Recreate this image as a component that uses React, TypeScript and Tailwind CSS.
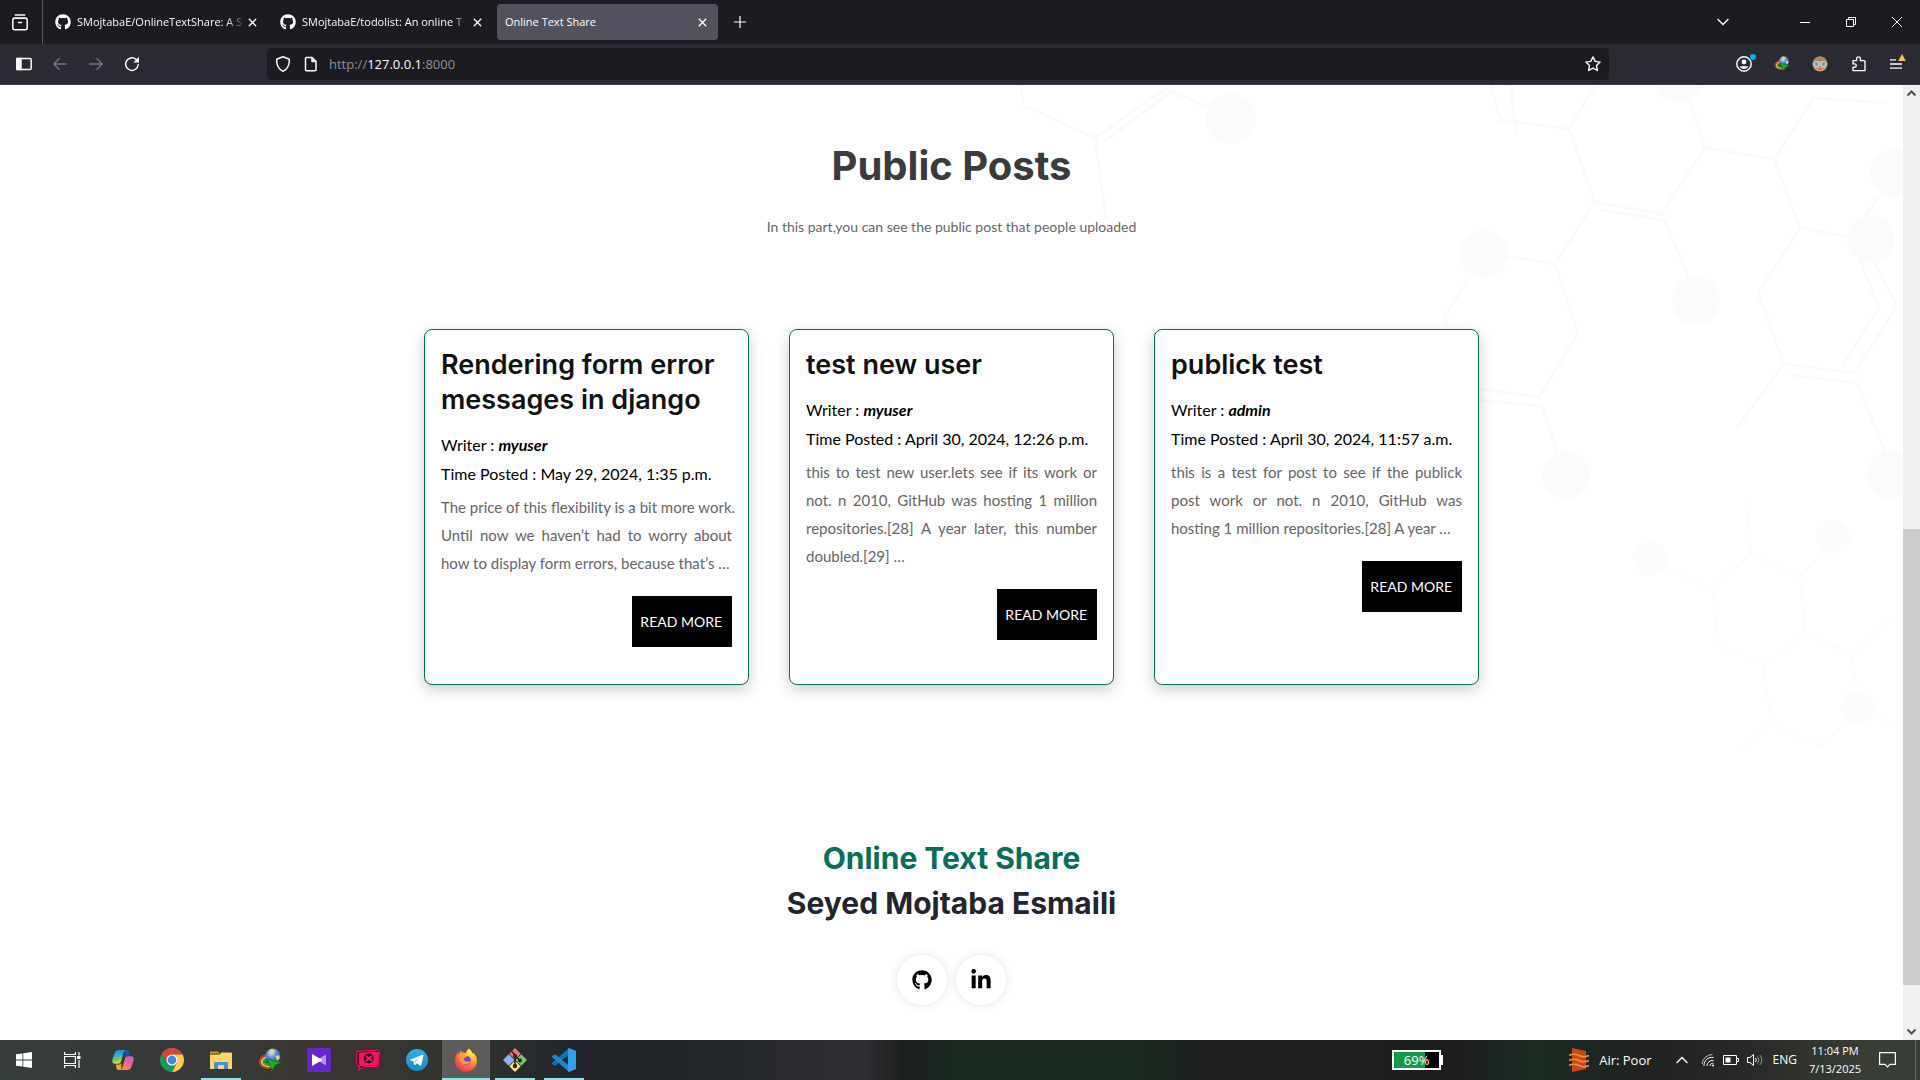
import React from "react";
import { FaGithub, FaLinkedinIn } from "react-icons/fa";

const display = "font-['Inter','Lato',sans-serif]";

/* ---------- browser chrome ---------- */

function CloseGlyph() {
  return (
    <svg viewBox="0 0 9 9" className="size-[9px]" fill="none" stroke="currentColor" strokeWidth="1.3">
      <path d="M.8.8l7.4 7.4M8.2.8L.8 8.2" />
    </svg>
  );
}

function Tab({ title, active = false }: { title: string; active?: boolean }) {
  return (
    <div
      className={
        active
          ? "flex h-9 w-[221px] items-center rounded bg-[#52525e] pl-2 pr-1 text-white"
          : "flex h-9 w-[221px] items-center rounded pl-2 pr-2.5 text-[#fbfbfe]"
      }
    >
      {!active && <FaGithub className="mr-1.5 size-4 shrink-0" />}
      <button
        className={
          active
            ? "min-w-0 flex-1 text-left text-[11px] leading-4 whitespace-nowrap"
            : "min-w-0 flex-1 text-left text-[11px] leading-4 whitespace-nowrap [mask-image:linear-gradient(to_right,black_88%,transparent)]"
        }
      >
        {title}
      </button>
      <button aria-label="Close tab" className={active ? "flex size-6 items-center justify-center" : "flex h-6 w-3 items-center justify-center"}>
        <CloseGlyph />
      </button>
    </div>
  );
}

function TabBar() {
  return (
    <header className="flex h-11 shrink-0 items-center bg-[#1c1b22] text-[#fbfbfe]">
      <button aria-label="Firefox View" className="flex h-11 w-[43px] items-center justify-center border-r border-[#5b5b66] pr-0.5">
        <svg viewBox="0 0 18 18" className="size-[18px]" fill="none" stroke="currentColor" strokeWidth="1.5" strokeLinecap="round">
          <path d="M4.3 2h9.4" />
          <rect x="1.8" y="5.2" width="14.4" height="11.6" rx="2" />
          <path d="M2.5 5.2h13M7.5 9.6h3" />
        </svg>
      </button>
      <nav className="ml-1 flex gap-1">
        <Tab title="SMojtabaE/OnlineTextShare: A S" />
        <Tab title="SMojtabaE/todolist: An online T" />
        <Tab title="Online Text Share" active />
      </nav>
      <button aria-label="New tab" className="flex size-11 items-center justify-center">
        <svg viewBox="0 0 12 12" className="size-3" stroke="currentColor" strokeWidth="1.2">
          <path d="M6 0v12M0 6h12" />
        </svg>
      </button>
      <div className="ml-auto flex">
        <button aria-label="List all tabs" className="mr-9 flex h-11 w-[46px] items-center justify-center">
          <svg viewBox="0 0 12 8" className="h-2 w-3" fill="none" stroke="currentColor" strokeWidth="1.4">
            <path d="M.6 1L6 6.4 11.4 1" />
          </svg>
        </button>
        <button aria-label="Minimize" className="flex h-11 w-[46px] items-center justify-center">
          <span className="h-px w-2.5 bg-white" />
        </button>
        <button aria-label="Restore" className="flex h-11 w-[46px] items-center justify-center">
          <svg viewBox="0 0 10 10" className="size-2.5" fill="none" stroke="currentColor">
            <path d="M.5 2.5h7v7h-7zM2.5 2.5v-2h7v7h-2" />
          </svg>
        </button>
        <button aria-label="Close" className="flex h-11 w-[46px] items-center justify-center">
          <svg viewBox="0 0 10 10" className="size-2.5" fill="none" stroke="currentColor">
            <path d="M0 0l10 10M10 0L0 10" />
          </svg>
        </button>
      </div>
    </header>
  );
}

function IdmIcon({ className }: { className: string }) {
  return (
    <svg viewBox="0 0 24 24" className={className} fill="none">
      <defs>
        <radialGradient id="globe" cx=".4" cy=".3" r=".8">
          <stop offset="0" stopColor="#d6e8ff" />
          <stop offset=".4" stopColor="#5b8fe0" />
          <stop offset="1" stopColor="#173a86" />
        </radialGradient>
      </defs>
      <path d="M11 6.500C4 7 .5 11.500 2 15.500c1.500 4 7.500 5 12 4" stroke="#e03030" strokeWidth="1.800" />
      <path d="M11 8.300C6 9 2.800 12 3.900 15c1.100 3 6 4 10 3" stroke="#f5d020" strokeWidth="1.800" />
      <path d="M11 10c-4 .6-6 2.600-5.300 4.600.8 2 4.300 2.900 8.300 2" stroke="#27b04a" strokeWidth="1.600" />
      <path d="M11 11.500c-2.500.5-4 1.500-3.600 2.800.6 1.300 3 1.700 6.600 1" stroke="#3c6fe0" strokeWidth="1.400" />
      <circle cx="15" cy="8" r="7.500" fill="url(#globe)" />
      <path d="M12 1.500c2-1 4.500-.3 5 1.500l-2 3-3.500-.5zM17.500 8l3.500-1 .8 3-2.500 3z" fill="#e2d48a" />
      <path d="M9 11l15 3.500-6.500 2.500L14 22.500z" fill="#13b413" stroke="#0a5c0a" strokeWidth=".6" />
    </svg>
  );
}

function Toolbar() {
  return (
    <div className="flex h-10 shrink-0 items-center bg-[#2b2a33] text-[#fbfbfe]">
      <button aria-label="Sidebar" className="ml-2 flex size-8 items-center justify-center">
        <svg viewBox="0 0 16 14" className="h-3.5 w-4" fill="none" stroke="currentColor" strokeWidth="1.5">
          <rect x=".8" y="1.5" width="14.4" height="11" rx="1.2" />
          <path d="M1 1.500h4v11H1z" fill="currentColor" />
        </svg>
      </button>
      <button aria-label="Back" className="ml-1 flex size-8 items-center justify-center text-[#77767f]">
        <svg viewBox="0 0 14 12" className="h-3 w-3.5" fill="none" stroke="currentColor" strokeWidth="1.4" strokeLinecap="round" strokeLinejoin="round">
          <path d="M13.300 6H1M6 .8L.8 6 6 11.200" />
        </svg>
      </button>
      <button aria-label="Forward" className="ml-1 flex size-8 items-center justify-center text-[#77767f]">
        <svg viewBox="0 0 14 12" className="h-3 w-3.5" fill="none" stroke="currentColor" strokeWidth="1.4" strokeLinecap="round" strokeLinejoin="round">
          <path d="M.7 6H13M8 .8L13.200 6 8 11.200" />
        </svg>
      </button>
      <button aria-label="Reload" className="ml-1 flex size-8 items-center justify-center">
        <svg viewBox="0 0 16 16" className="size-4" fill="none" stroke="currentColor" strokeWidth="1.5" strokeLinecap="round">
          <path d="M14.200 8.500A6.300 6.300 0 1 1 12 3.300" />
          <path d="M15 .8v5.700H9.300z" fill="currentColor" stroke="none" />
        </svg>
      </button>
      <div className="ml-[119px] flex h-8 min-w-0 flex-1 items-center rounded bg-[#1c1b22]">
        <button aria-label="Tracking protection" className="flex size-8 items-center justify-center">
          <svg viewBox="0 0 16 16" className="size-4" fill="none" stroke="currentColor" strokeWidth="1.5" strokeLinejoin="round">
            <path d="M8 .8l6.300 2.500c.3 5.200-1.600 9.600-6.300 12C3.300 12.900 1.400 8.500 1.700 3.300z" />
          </svg>
        </button>
        <button aria-label="Site information" className="flex h-8 w-6 items-center justify-center">
          <svg viewBox="0 0 14 16" className="h-4 w-3.5" fill="none" stroke="currentColor" strokeWidth="1.500" strokeLinejoin="round">
            <path d="M2.500 1.500H8l4 4v8.300a1 1 0 0 1-1 1H2.500a1 1 0 0 1-1-1v-11.300a1 1 0 0 1 1-1z" />
            <path d="M8 1.500v4h4z" fill="currentColor" />
          </svg>
        </button>
        <label className="relative ml-1.5 flex h-8 min-w-0 flex-1 items-center pt-0.5 text-[13px] text-[#8f8f9d]">
          <span>
            http://<span className="text-[#fbfbfe]">127.0.0.1</span>:8000
          </span>
          <input aria-label="Address" className="absolute inset-0 w-full bg-transparent outline-none" />
        </label>
        <button aria-label="Bookmark" className="flex size-8 items-center justify-center">
          <svg viewBox="0 0 16 16" className="size-4" fill="none" stroke="currentColor" strokeWidth="1.400" strokeLinejoin="round">
            <path d="M8 .9l2.200 4.500 4.900.7-3.600 3.500.9 4.900L8 12.200l-4.400 2.300.9-4.900L.9 6.100l4.900-.7z" />
          </svg>
        </button>
      </div>
      <div className="ml-[119px] mr-2 flex items-center gap-1.5">
        <button aria-label="Account" className="relative flex size-8 items-center justify-center">
          <svg viewBox="0 0 16 16" className="size-4" fill="none">
            <circle cx="8" cy="8" r="7.200" stroke="currentColor" strokeWidth="1.500" />
            <circle cx="8" cy="6" r="2.400" fill="currentColor" />
            <path d="M3.800 10.300h8.400c-.8 1.900-2.300 2.700-4.200 2.700s-3.400-.8-4.200-2.700z" fill="currentColor" />
          </svg>
          <span className="absolute top-1.5 right-1 size-1.5 rounded-full bg-[#00b3f4]" />
        </button>
        <button aria-label="Download manager" className="flex size-8 items-center justify-center">
          <IdmIcon className="size-4" />
        </button>
        <button aria-label="Profile extension" className="flex size-8 items-center justify-center">
          <svg viewBox="0 0 16 16" className="size-4">
            <circle cx="8" cy="8" r="7.500" fill="#d09a78" />
            <path d="M.8 7C1 2.500 4.500.5 8 .5s7 2 7.200 6.500C13 5.500 11 5 8 5s-5 .5-7.200 2z" fill="#a9855c" />
            <circle cx="4.500" cy="8" r="2.500" fill="#6d9dab" stroke="#d5e6ea" />
            <circle cx="11.500" cy="8" r="2.500" fill="#6d9dab" stroke="#d5e6ea" />
            <path d="M6.500 13h3" stroke="#c2412d" />
          </svg>
        </button>
        <button aria-label="Extensions" className="flex size-8 items-center justify-center">
          <svg viewBox="-2 0 16 16" className="size-4" fill="none" stroke="currentColor" strokeWidth="1.400" strokeLinejoin="round">
            <path d="M1 4.600h3.600V2.800a1.900 1.900 0 0 1 3.800 0v1.800h3.600a1 1 0 0 1 1 1v9H1v-3.300h1.600a1.700 1.700 0 0 0 0-3.400H1z" />
          </svg>
        </button>
        <button aria-label="Menu" className="relative flex size-8 items-center justify-center">
          <svg viewBox="0 0 12 10" className="h-2.5 w-3" stroke="currentColor" strokeWidth="1.300">
            <path d="M0 .8h6M0 5h12M0 9.200h12" />
          </svg>
          <svg viewBox="0 0 10 9" className="absolute top-1.5 right-1.5 h-[7px] w-2">
            <path d="M5 0l5 9H0z" fill="#ffbd4f" />
          </svg>
        </button>
      </div>
    </div>
  );
}

/* ---------- page ---------- */

function Molecules() {
  return (
    <svg viewBox="0 0 943 700" className="pointer-events-none absolute top-0 right-0 h-[700px] w-[943px]" fill="none" stroke="#fafafa" strokeWidth="3">
      <path d="M61 0l2 20 72 33 70-49 41 17M145 56l66-49M135 53l11 81" />
      <path d="M531 0l9 35 69 9 25-42M551 0l5 51M609 44l26 73 66 12 44-66-16-50M640 125l64 10M745 63l69 11 40-61 74 5M814 74l26 69 51 9 28-40M840 143l-42 65 26 71 70 9 43-67-34-65M891 152l28 71-37 58M830 290l67 8 28 68M824 279l-48 65" />
      <path d="M635 117l-40 62-49-8M595 179l23 69-39 64-59-8M520 315l62 6 15 45M508 196l-24 36 6 18M704 135l25 57" />
      <g strokeWidth="2" stroke="#fcfcfc">
        <path d="M786 413l5 56-39 34-48-19M752 503l7 57 44 20 42-31-5-58-49-22M840 491l26-27M845 549l46 19 43-35M891 568l6 35M803 580l8 58 49 23 35-30M811 638l-33 29M897 624l46 20" />
      </g>
      <g fill="#fbfbfb" stroke="none">
        <circle cx="271" cy="34" r="25" />
        <circle cx="718" cy="-6" r="24" />
        <circle cx="934" cy="88" r="24" />
        <circle cx="911" cy="154" r="24" />
        <circle cx="524" cy="169" r="24" />
        <circle cx="736" cy="216" r="24" />
        <circle cx="606" cy="390" r="24" />
        <circle cx="931" cy="390" r="24" />
      </g>
      <g fill="#fcfcfc" stroke="none">
        <circle cx="690" cy="474" r="17" />
        <circle cx="873" cy="452" r="17" />
        <circle cx="897" cy="623" r="17" />
      </g>
    </svg>
  );
}

const posts = [
  {
    title: "Rendering form error messages in django",
    writer: "myuser",
    time: "May 29, 2024, 1:35 p.m.",
    lines: [
      "The price of this flexibility is a bit more work.",
      "Until now we haven’t had to worry about",
      "how to display form errors, because that’s …",
    ],
  },
  {
    title: "test new user",
    writer: "myuser",
    time: "April 30, 2024, 12:26 p.m.",
    lines: [
      "this to test new user.lets see if its work or",
      "not. n 2010, GitHub was hosting 1 million",
      "repositories.[28] A year later, this number",
      "doubled.[29] …",
    ],
  },
  {
    title: "publick test",
    writer: "admin",
    time: "April 30, 2024, 11:57 a.m.",
    lines: [
      "this is a test for post to see if the publick",
      "post work or not. n 2010, GitHub was",
      "hosting 1 million repositories.[28] A year …",
    ],
  },
];

function PostCard({ title, writer, time, lines }: (typeof posts)[number]) {
  return (
    <article className="flex flex-col rounded-lg border border-[#046f5a] bg-white px-4 pt-[17px] pb-[37px] shadow-[0_5px_15px_rgba(0,0,0,0.2)]">
      <h3 className={`${display} text-[27px] leading-[35px] font-semibold text-[#111]`}>{title}</h3>
      <p className="mt-[13px] text-[16px] leading-[29px] text-black">
        Writer : <em className="font-bold">{writer}</em>
      </p>
      <p className="text-[16px] leading-[29px] text-black">Time Posted : {time}</p>
      <p className="mt-[5px] text-justify text-[15px] leading-[28px] text-[#666]">
        {lines.map((line, i) => (
          <span
            key={line}
            className={i < lines.length - 1 ? "xl:block xl:whitespace-nowrap xl:[text-align-last:justify]" : "xl:block xl:whitespace-nowrap"}
          >
            {line}{" "}
          </span>
        ))}
      </p>
      <a href="#post" className="mt-[19px] self-end bg-black py-[15px] pr-2.5 pl-2 text-[14px] leading-[21px] text-white">
        READ MORE
      </a>
    </article>
  );
}

function Page() {
  return (
    <main className="relative min-w-0 flex-1 overflow-hidden bg-white font-['Lato',sans-serif]">
      <Molecules />
      <div className="relative">
        <section className="pt-14 text-center">
          <h1 className={`${display} text-[40px] leading-[50px] font-bold text-[#3b3b3b]`}>Public Posts</h1>
          <p className="mt-[23px] text-[14px] leading-[26px] text-[#666]">In this part,you can see the public post that people uploaded</p>
        </section>
        <section className="mx-auto mt-[89px] grid max-w-[1055px] grid-cols-3 gap-10">
          {posts.map((p) => (
            <PostCard key={p.title} {...p} />
          ))}
        </section>
        <footer className="mt-[151px] flex flex-col items-center">
          <h2 className={`${display} text-center text-[30px] leading-[45px] font-bold text-[#22252d]`}>
            <span className="block text-[#046f5a]">Online Text Share</span>
            Seyed Mojtaba Esmaili
          </h2>
          <div className="mt-[29px] flex gap-[9px] text-black">
            <a href="#github" aria-label="GitHub" className="flex size-[50px] items-center justify-center rounded-full bg-white shadow-[0_0_10px_rgba(0,0,0,0.12)]">
              <FaGithub className="size-5" />
            </a>
            <a href="#linkedin" aria-label="LinkedIn" className="flex size-[50px] items-center justify-center rounded-full bg-white shadow-[0_0_10px_rgba(0,0,0,0.12)]">
              <FaLinkedinIn className="size-[22px]" />
            </a>
          </div>
        </footer>
      </div>
    </main>
  );
}

function ScrollBar() {
  return (
    <div className="flex w-[17px] shrink-0 flex-col items-center bg-[#f0f0f0] text-[#505050]">
      <svg viewBox="0 0 17 17" className="size-[17px]" fill="none" stroke="currentColor" strokeWidth="2">
        <path d="M4.500 10.500l4-4 4 4" />
      </svg>
      <div className="flex-[427]" />
      <div className="w-full flex-[456] bg-[#cdcdcd]" />
      <div className="flex-[38]" />
      <svg viewBox="0 0 17 17" className="size-[17px]" fill="none" stroke="currentColor" strokeWidth="2">
        <path d="M4.500 6.500l4 4 4-4" />
      </svg>
    </div>
  );
}

/* ---------- taskbar ---------- */

function TaskButton({ label, state = "idle", children }: { label: string; state?: "idle" | "open" | "active"; children: React.ReactNode }) {
  return (
    <button
      aria-label={label}
      className={state === "active" ? "relative flex h-10 w-12 items-center justify-center bg-[#5c5d5b]" : "relative flex h-10 w-12 items-center justify-center"}
    >
      {children}
      {state === "open" && <span className="absolute inset-x-1 bottom-0 h-0.5 bg-[#8ce4ee]" />}
      {state === "active" && <span className="absolute inset-x-0 bottom-0 h-0.5 bg-[#8ce4ee]" />}
    </button>
  );
}

function Taskbar() {
  return (
    <footer className="flex h-10 shrink-0 items-center bg-[linear-gradient(90deg,#353c3c_0%,#373836_13%,#3c3531_16%,#363530_21%,#2c2f2d_26%,#1f252a_30%,#222529_36%,#2d2e31_45%,#1d1f1f_47%,#182a1f_50%,#182a1f_59%,#1e1f1e_63%,#1d1e1e_76%,#1b2c22_80%,#202121_86%,#2a2c29_92%,#383d35_97%,#383d35_100%)] text-white">
      <TaskButton label="Start">
        <svg viewBox="0 0 16 16" className="size-4" fill="#fff">
          <path d="M0 2.300l6.500-.9v6.200H0zM7.300 1.300L16 0v7.600H7.300zM0 8.400h6.500v6.200L0 13.700zM7.300 8.400H16V16l-8.700-1.200z" />
        </svg>
      </TaskButton>
      <TaskButton label="Task View">
        <svg viewBox="0 0 17 16" className="h-4 w-[17px]" fill="none" stroke="#fff" strokeWidth="1.200">
          <path d="M.6 4.500h10.800v7H.6zM.6 0v2.500h10.800V0M.6 16v-2.500h10.800V16M15 0v3.500M15 8v8" />
          <path d="M13 4h3.500v3H13z" fill="#fff" stroke="none" />
        </svg>
      </TaskButton>
      <div className="ml-[3px] flex gap-px">
        <TaskButton label="Copilot">
          <svg viewBox="0 0 24 24" className="size-[22px]">
            <defs>
              <linearGradient id="cpA" x1="0" y1="0" x2=".3" y2="1">
                <stop offset="0" stopColor="#1a7fe0" />
                <stop offset=".5" stopColor="#27b6c9" />
                <stop offset=".8" stopColor="#8fd04a" />
                <stop offset="1" stopColor="#f4d52c" />
              </linearGradient>
              <linearGradient id="cpB" x1="1" y1="0" x2=".4" y2="1">
                <stop offset="0" stopColor="#a66cf0" />
                <stop offset=".5" stopColor="#ee5f96" />
                <stop offset="1" stopColor="#fb8a4c" />
              </linearGradient>
            </defs>
            <path d="M14 1h2.500c1.500 0 2.200 1 2.600 2.300L20 7h-3.500c-1.500 0-2.300.8-2.800 2.300z" fill="#1c4fc0" />
            <path d="M6.800 1h8.500c-1.600.3-2.200 1.500-2.700 3.200L10 13c-.6 2-1.500 3-3.500 3H3C.6 16-.2 14 .5 11.500l2.600-7.800C3.700 2 4.800 1 6.800 1z" fill="url(#cpA)" />
            <path d="M10 23H7.500C6 23 5.300 22 4.900 20.700L4 17h3.500c1.500 0 2.300-.8 2.800-2.300z" fill="#f0a33c" />
            <path d="M17.200 23H8.700c1.600-.3 2.200-1.500 2.700-3.200L14 11c.6-2 1.500-3 3.500-3H21c2.400 0 3.200 2 2.500 4.500l-2.600 7.800c-.6 1.700-1.700 2.700-3.700 2.700z" fill="url(#cpB)" />
          </svg>
        </TaskButton>
        <TaskButton label="Chrome">
          <svg viewBox="0 0 24 24" className="size-6">
            <path d="M12 6.600h10.700A12 12 0 0 0 1.600 6l5.700 8.700z" fill="#db4437" />
            <path d="M16.700 14.700L12 24a12 12 0 0 0 10.700-17.400H12z" fill="#ffcd40" />
            <path d="M7.300 14.700L1.600 6A12 12 0 0 0 11.400 24l5.300-9.300z" fill="#0f9d58" />
            <circle cx="12" cy="12" r="5.500" fill="#fff" />
            <circle cx="12" cy="12" r="4.400" fill="#4285f4" />
          </svg>
        </TaskButton>
        <TaskButton label="File Explorer" state="open">
          <svg viewBox="0 0 22 19" className="h-[19px] w-[22px]">
            <path d="M0 1.500Q0 .5 1 .5h7l2 2H0z" fill="#d99a10" />
            <path d="M0 3.500h10l1-2h10q1 0 1 1v15.500H0z" fill="#ffd567" />
            <path d="M4 18v-6q0-1 1-1h12q1 0 1 1v6h-4v-4H8v4z" fill="#3d93dc" />
          </svg>
        </TaskButton>
        <TaskButton label="Internet Download Manager">
          <IdmIcon className="size-6" />
        </TaskButton>
        <TaskButton label="KMPlayer">
          <svg viewBox="0 0 24 24" className="size-6">
            <rect width="24" height="24" rx="1.500" fill="#6425c9" />
            <path d="M19 6.500v11L9.500 12z" fill="#b391e8" />
            <path d="M5 6v12l10.500-6z" fill="#fff" />
          </svg>
        </TaskButton>
        <TaskButton label="Chat">
          <svg viewBox="0 0 24 22" className="h-[22px] w-6" fill="none" stroke="#ff0f63" strokeLinejoin="round">
            <path d="M1 2.500L22 1l1.300 3-1.500 13.500H8.500l-6 3.500 1.500-3.500H2L.6 14z" fill="#50091f" strokeWidth="1" />
            <path d="M3.500 4l19-.5-1.500 12.500-17.500.5z" fill="#ff0f63" />
            <circle cx="12.800" cy="9.500" r="5" fill="#33121c" stroke="none" />
            <path d="M9.800 7l6 5M15.800 7l-6 5" strokeWidth="2" />
          </svg>
        </TaskButton>
        <TaskButton label="Telegram">
          <svg viewBox="0 0 22 22" className="size-[22px]">
            <defs>
              <linearGradient id="tg" x1="0" y1="0" x2="0" y2="1">
                <stop offset="0" stopColor="#37aee2" />
                <stop offset="1" stopColor="#1689c9" />
              </linearGradient>
            </defs>
            <circle cx="11" cy="11" r="11" fill="url(#tg)" />
            <path d="M4 10.800l12.500-5c.6-.2 1 .2.9.8L15.300 16c-.2.800-.7 1-1.300.6l-3.200-2.400-1.700 1.700c-.4.300-.7.200-.8-.3l-.9-3.300-3.300-1c-.7-.2-.7-.3-.1-.5z" fill="#fff" />
            <path d="M8.300 12.200l6.200-4.500-4.700 5-.5 2.800z" fill="#a9d5ee" />
          </svg>
        </TaskButton>
        <TaskButton label="Firefox" state="active">
          <svg viewBox="0 0 24 24" className="size-6">
            <defs>
              <radialGradient id="ff" cx=".75" cy=".15" r="1">
                <stop offset="0" stopColor="#fff14a" />
                <stop offset=".35" stopColor="#ffb72a" />
                <stop offset=".65" stopColor="#ff6a3a" />
                <stop offset="1" stopColor="#f0206e" />
              </radialGradient>
            </defs>
            <path d="M14.500.5c3 1.700 3.600 4 4 5.500.4-.3.300-1 .2-1.700 2.600 2 4.300 5 4.300 8.700A11 10.700 0 0 1 1 13c0-3.500 1-6.500 3-9 .2 1.200.5 1.800 1 2.300.3-1.800 1.200-3 2.500-3.800-.1 1 .2 1.700.7 2.200 1.500-.3 2.700 0 3.700.6C12.500 3.500 13 2 14.500.5z" fill="url(#ff)" />
            <circle cx="12.300" cy="12.500" r="4.600" fill="#7b3fe0" />
            <path d="M5 7c2-1.500 4.600-1 5.800.4 1 .1 1.900.4 2.400 1-1 .9-2.700.7-3.300 2.300-.4 1.200.5 2.600 2.300 2.900 1.800.2 3-.8 4.300-.3-.8 2-2.700 3.500-5 3.300C7 16.300 4.500 12 5 7z" fill="#ff9a2e" />
          </svg>
        </TaskButton>
        <TaskButton label="Git Bash" state="open">
          <svg viewBox="0 0 24 24" className="size-6">
            <path d="M12 0l5.700 5.700L12 11.400 6.300 5.700z" fill="#f27474" />
            <path d="M5.700 6.300l5.700 5.700-5.700 5.700L0 12z" fill="#86b4fa" />
            <path d="M18.300 6.300L24 12l-5.700 5.700-5.700-5.700z" fill="#7ec96a" />
            <path d="M12 12.600l5.700 5.700L12 24l-5.700-5.700z" fill="#ffe07a" />
            <path d="M8.500 3l3.500 4v11M12 8l5 4.500" stroke="#2b2422" strokeWidth="1.600" fill="none" />
            <g fill="#2b2422">
              <circle cx="12" cy="8" r="2" />
              <circle cx="12" cy="18" r="2.200" />
              <circle cx="17" cy="12.500" r="2" />
            </g>
          </svg>
        </TaskButton>
        <TaskButton label="Visual Studio Code" state="open">
          <svg viewBox="0 0 24 24" className="size-6">
            <path d="M17 0v6.500L3.200 17.700 0 15.900v-1z" fill="#1173b8" />
            <path d="M17 24v-6.500L3.200 6.300 0 8.100v1z" fill="#1b8ad3" />
            <path d="M17 0l7 2.900v18.200L17 24c-.7-.4-1-.9-1-1.600V1.600c0-.7.300-1.200 1-1.600z" fill="#2ba3f0" />
          </svg>
        </TaskButton>
      </div>

      <div className="ml-auto flex items-center">
        <div className="flex items-center">
          <div className="flex h-5 w-[49px] items-center justify-center border-2 border-white bg-[linear-gradient(90deg,#159a48_69%,#000_69%)] text-[13px] leading-4">69%</div>
          <span className="h-2.5 w-0.5 bg-white" />
        </div>
        <button className="ml-[126px] flex items-center gap-2.5 text-[13px] leading-5">
          <svg viewBox="0 0 20 24" className="h-6 w-5" fill="none">
            <path d="M3 0l14 3v18L3 24z" fill="#c9490f" />
            <path d="M0 7.500q5-2.500 10 0t10 0M0 12.500q5-2.500 10 0t10 0M0 17.500q5-2.500 10 0t10 0" stroke="#f58a4b" strokeWidth="1.700" />
          </svg>
          Air: Poor
        </button>
        <button aria-label="Show hidden icons" className="ml-6 flex h-10 items-center">
          <svg viewBox="0 0 12 8" className="h-2 w-3" fill="none" stroke="#fff" strokeWidth="1.300">
            <path d="M.6 7L6 1.500 11.400 7" />
          </svg>
        </button>
        <svg viewBox="0 0 14 14" className="ml-[13px] size-3.5" fill="none" stroke="#fff">
          <path d="M1 11A10.500 10.500 0 0 1 11.500 1.500" opacity=".7" />
          <path d="M3 13A8 8 0 0 1 12.500 4.500M6 13a5.500 5.500 0 0 1 6.500-5.500M9 13a3 3 0 0 1 3.500-2.800" />
          <circle cx="12" cy="12.500" r="1" fill="#fff" stroke="none" />
        </svg>
        <svg viewBox="0 0 16 10" className="ml-2 h-2.5 w-4" fill="none" stroke="#fff">
          <path d="M.5.5h13v9H.5zM14 3.500h1.500v3H14" />
          <path d="M2.500 2.500h5v5h-5z" fill="#fff" stroke="none" />
        </svg>
        <svg viewBox="0 0 16 14" className="ml-2 h-3.5 w-4" fill="none" stroke="#fff">
          <path d="M.5 4.500h2.500L6.500 1.500v11L3 9.500H.5zM8.500 5q1.500 2 0 4" />
          <path d="M10.500 3.500q3 3.500 0 7M12.800 2q4 5 0 10" opacity=".5" />
        </svg>
        <button className="ml-2.5 text-[12px] leading-4">ENG</button>
        <button className="mr-px ml-[11px] w-[54px] text-center text-[11px] leading-[18px] whitespace-nowrap">
          11:04 PM
          <br />
          7/13/2025
        </button>
        <button aria-label="Notifications" className="ml-4 flex h-10 items-center">
          <svg viewBox="0 0 17 16" className="h-4 w-[17px]" fill="none" stroke="#fff" strokeWidth="1.200">
            <path d="M.6.6h15.800v11.800h-5.400L8.500 15 6 12.400H.6z" />
          </svg>
        </button>
        <span className="ml-[19px] mr-1 h-10 w-px bg-[#6b6f68]" />
      </div>
    </footer>
  );
}

export default function App() {
  return (
    <div className="flex h-screen flex-col overflow-hidden bg-white font-['Open_Sans',sans-serif]">
      <TabBar />
      <Toolbar />
      <div className="flex min-h-0 flex-1 border-t border-[#3e3d46]">
        <Page />
        <ScrollBar />
      </div>
      <Taskbar />
    </div>
  );
}
